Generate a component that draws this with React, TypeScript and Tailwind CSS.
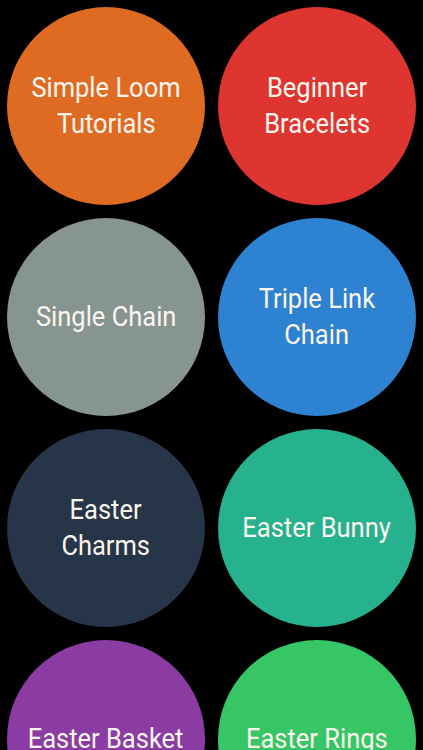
import React from "react";

const items: { label: string[]; color: string }[] = [
  { label: ["Simple Loom", "Tutorials"], color: "bg-[#df6b23]" },
  { label: ["Beginner", "Bracelets"], color: "bg-[#de3530]" },
  { label: ["Single Chain"], color: "bg-[#869592]" },
  { label: ["Triple Link", "Chain"], color: "bg-[#2d83d1]" },
  { label: ["Easter", "Charms"], color: "bg-[#263648]" },
  { label: ["Easter Bunny"], color: "bg-[#26b28f]" },
  { label: ["Easter Basket"], color: "bg-[#8a3ca3]" },
  { label: ["Easter Rings"], color: "bg-[#36c665]" },
];

export default function App() {
  return (
    <div className="w-[423px] h-[750px] overflow-hidden bg-black">
      <div className="grid grid-cols-[198px_198px] gap-x-[13px] gap-y-[13px] pl-[7px] pt-[7px]">
        {items.map((it, i) => (
          <div
            key={i}
            className={`${it.color} w-[198px] h-[198px] rounded-full flex flex-col items-center justify-center text-[#fdf6ee] text-[28px] leading-[36px] text-center font-normal`}
            style={{ fontFamily: 'Roboto, "Liberation Sans", sans-serif' }}
          >
            {it.label.map((l, j) => (
              <span key={j} className="block whitespace-nowrap scale-x-[0.91]">
                {l}
              </span>
            ))}
          </div>
        ))}
      </div>
    </div>
  );
}
